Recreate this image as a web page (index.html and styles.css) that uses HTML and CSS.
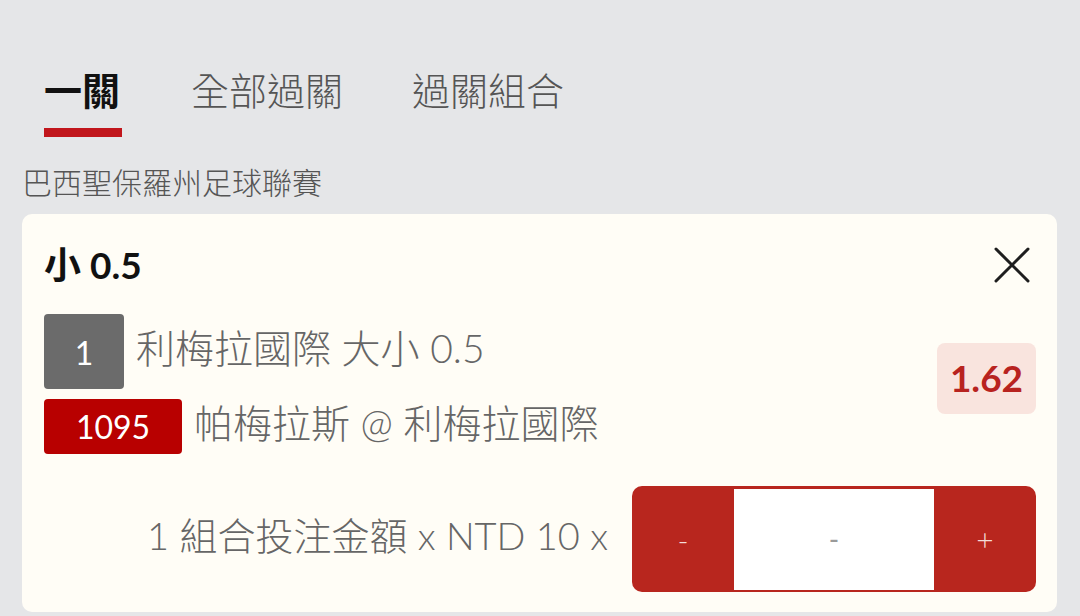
FILE: index.html
```html
<!DOCTYPE html>
<html lang="zh-Hant">
<head>
<meta charset="utf-8">
<link rel="stylesheet" href="styles.css">
</head>
<body>
<div class="page">
  <nav class="tabs">
    <div class="tab active">
      <span class="tab-label">一關</span>
      <span class="tab-bar"></span>
    </div>
    <div class="tab"><span class="tab-label">全部過關</span></div>
    <div class="tab"><span class="tab-label">過關組合</span></div>
  </nav>
  <div class="league">巴西聖保羅州足球聯賽</div>
  <section class="card">
    <div class="card-head">
      <div class="title">小 0.5</div>
      <svg class="close" width="36" height="36" viewBox="0 0 36 36" aria-hidden="true">
        <path d="M2 2 L34 34 M34 2 L2 34" stroke="#1e1e1e" stroke-width="3" fill="none" stroke-linecap="round"/>
      </svg>
    </div>
    <div class="card-body">
      <div class="lines">
        <div class="line">
          <span class="badge badge-gray">1</span>
          <span class="line-text">利梅拉國際 大小 0.5</span>
        </div>
        <div class="line">
          <span class="badge badge-red">1095</span>
          <span class="line-text">帕梅拉斯 @ 利梅拉國際</span>
        </div>
      </div>
      <div class="odds">1.62</div>
    </div>
    <div class="card-foot">
      <span class="stake-text">1 組合投注金額 x NTD 10 x</span>
      <div class="stepper">
        <span class="step-btn">-</span>
        <span class="step-input">-</span>
        <span class="step-btn">+</span>
      </div>
    </div>
  </section>
</div>
</body>
</html>
```

FILE: styles.css
```css
* { box-sizing: border-box; }
html, body { margin: 0; padding: 0; }
body {
  background: #e5e6e8;
  font-family: Lato, "Noto Sans CJK TC", "Noto Sans", sans-serif;
  width: 1080px;
  height: 616px;
  overflow: hidden;
}
.page {
  padding: 67px 23px 0 22px;
}
.tabs {
  display: flex;
  gap: 69px;
  padding-left: 22px;
  align-items: flex-start;
}
.tab {
  display: flex;
  flex-direction: column;
  align-items: stretch;
}
.tab-label {
  font-size: 38px;
  line-height: 46px;
  color: #555555;
  font-weight: 300;
  white-space: nowrap;
}
.tab.active .tab-label {
  color: #111111;
  font-weight: 700;
}
.tab-bar {
  display: block;
  height: 9px;
  margin-top: 15px;
  background: #c1161c;
  width: 78px;
}
.league {
  margin-top: 27px;
  font-size: 30px;
  line-height: 36px;
  color: #555555;
  font-weight: 300;
}
.card {
  margin-top: 14px;
  background: #fffdf6;
  border-radius: 10px;
  padding: 31px 21px 20px 22px;
}
.card-head {
  display: flex;
  justify-content: space-between;
  align-items: center;
  height: 40px;
}
.title {
  font-size: 37px;
  font-weight: 700;
  color: #111111;
  line-height: 40px;
}
.close {
  display: block;
  margin-right: 6px;
}
.card-body {
  margin-top: 29px;
  display: flex;
  justify-content: space-between;
  align-items: center;
}
.lines {
  display: flex;
  flex-direction: column;
  gap: 10px;
}
.line {
  display: flex;
  align-items: center;
  gap: 12px;
}
.badge {
  display: flex;
  align-items: center;
  justify-content: center;
  color: #ffffff;
  font-size: 32px;
  border-radius: 4px;
}
.badge-gray {
  width: 80px;
  height: 75px;
  background: #6b6b6b;
  padding-top: 2px;
}
.badge-red {
  width: 138px;
  height: 55px;
  background: #b80000;
}
.line-text {
  font-size: 39px;
  line-height: 44px;
  padding-bottom: 8px;
  color: #666666;
  font-weight: 300;
  white-space: nowrap;
}
.odds {
  width: 99px;
  height: 71px;
  margin-bottom: 12px;
  border-radius: 8px;
  background: #f9e4de;
  color: #b8231f;
  font-size: 37px;
  font-weight: 700;
  display: flex;
  align-items: center;
  justify-content: center;
  padding-bottom: 2px;
}
.card-foot {
  margin-top: 32px;
  display: flex;
  justify-content: flex-end;
  align-items: center;
  gap: 24px;
}
.stake-text {
  font-size: 38px;
  line-height: 44px;
  padding-bottom: 8px;
  color: #666666;
  font-weight: 300;
  white-space: nowrap;
}
.stepper {
  width: 404px;
  height: 106px;
  border-radius: 10px;
  background: #b8261e;
  display: flex;
  align-items: center;
}
.step-btn {
  width: 102px;
  display: flex;
  justify-content: center;
  color: #f4dcd9;
  font-size: 30px;
  font-weight: 300;
}
.step-input {
  width: 200px;
  height: 101px;
  background: #ffffff;
  display: flex;
  align-items: center;
  justify-content: center;
  color: #9a9a9a;
  font-size: 28px;
}
```
